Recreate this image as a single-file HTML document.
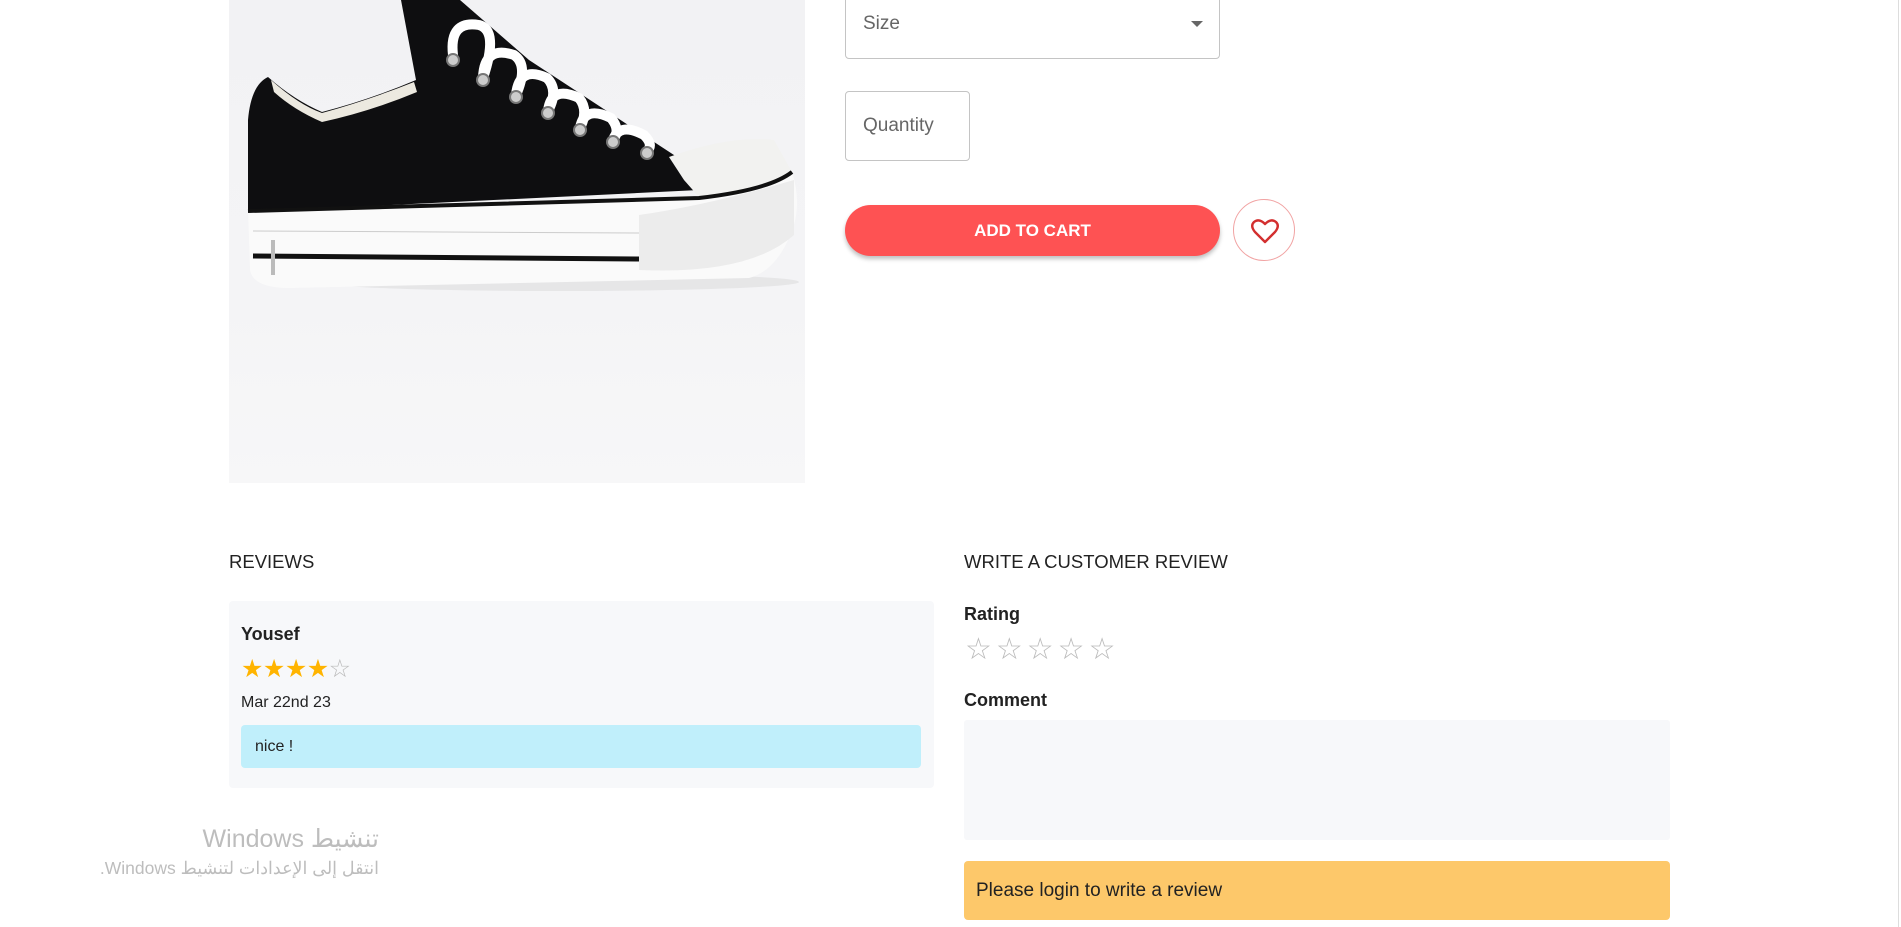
<!DOCTYPE html>
<html><head><meta charset="utf-8">
<style>
*{margin:0;padding:0;box-sizing:border-box}
body{width:1901px;height:927px;background:#fff;position:relative;overflow:hidden;font-family:"Liberation Sans",Arial,sans-serif;color:#222}
.abs{position:absolute}
.img{left:229px;top:0;width:576px;height:483px;background:linear-gradient(#f2f2f4,#f4f4f6 60%,#f7f7f8)}
.sel{left:845px;top:-20px;width:375px;height:79px;border:1px solid #c4c4c4;border-radius:4px}
.sel span{position:absolute;left:17px;top:32px;font-size:19px;color:#666}
.sel i{position:absolute;right:16px;top:40px;width:0;height:0;border-left:6px solid transparent;border-right:6px solid transparent;border-top:6px solid #666}
.qty{left:845px;top:91px;width:125px;height:70px;border:1px solid #c4c4c4;border-radius:4px}
.qty span{position:absolute;left:17px;top:23px;font-size:19px;color:#666}
.btn{left:845px;top:205px;width:375px;height:51px;background:#fe5253;border-radius:26px;box-shadow:0 3px 4px rgba(0,0,0,.25);color:#fff;font-weight:bold;font-size:17px;text-align:center;line-height:51px}
.heart{left:1233px;top:199px;width:62px;height:62px;border:1px solid #f1a3a3;border-radius:50%}
h3{position:absolute;font-weight:normal;font-size:19px;color:#222}
.card{left:229px;top:601px;width:705px;height:187px;background:#f7f8fa;border-radius:4px}
.lbl{position:absolute;font-size:18px;font-weight:bold;color:#222}
</style></head><body>
<div class="abs img">
<svg width="576" height="483" viewBox="0 0 576 483">
<ellipse cx="330" cy="282" rx="240" ry="9" fill="#dcdcde" opacity=".6"/>
<path d="M19,210 L19,120 Q22,85 39,77 Q65,100 93,112 Q140,100 187,80 L172,0 L231,0 L300,60 L448,157 L470,190 L19,212 Z" fill="#0e0e10"/>
<path d="M42,80 Q70,105 93,113 Q140,100 185,82 L188,92 Q140,112 93,122 Q65,110 45,92Z" fill="#ece9e0"/>
<path d="M440,157 Q500,135 545,140 L563,172 Q540,190 470,197 L455,180Z" fill="#f2f2f0"/>
<path d="M19,210 L470,197 Q540,190 563,172 Q572,200 565,225 Q550,270 520,278 L60,288 Q24,288 21,270Z" fill="#fafafa"/>
<path d="M19,211 L470,198 Q540,190 563,172" stroke="#111" stroke-width="4" fill="none"/>
<path d="M24,256 L410,259" stroke="#111" stroke-width="5" fill="none"/>
<path d="M24,231 L410,233" stroke="#ccc" stroke-width="1" fill="none"/>
<path d="M410,215 Q480,205 565,180 L565,235 Q520,275 410,270Z" fill="#ececec"/>
<path d="M44,240 L44,275" stroke="#bbb" stroke-width="4"/>
<g stroke="#fff" stroke-width="10" stroke-linecap="round" fill="none">
<path d="M224,55 Q220,20 250,25 Q270,30 254,78"/><path d="M254,78 Q255,45 285,55 Q300,65 287,95"/><path d="M287,95 Q290,65 318,78 Q330,90 319,111"/><path d="M319,111 Q322,85 350,98 Q360,110 351,128"/><path d="M351,128 Q355,105 382,118 Q392,130 384,140"/><path d="M384,140 Q390,122 415,135 Q425,145 418,151"/>
</g>
<g fill="#ccc" stroke="#777" stroke-width="2">
<circle cx="224" cy="60" r="6"/><circle cx="254" cy="80" r="6"/><circle cx="287" cy="97" r="6"/><circle cx="319" cy="113" r="6"/><circle cx="351" cy="130" r="6"/><circle cx="384" cy="142" r="6"/><circle cx="418" cy="153" r="6"/>
</g>
</svg>
</div>
<div class="abs sel"><span>Size</span><i></i></div>
<div class="abs qty"><span>Quantity</span></div>
<div class="abs btn">ADD TO CART</div>
<div class="abs heart"><svg width="62" height="62" viewBox="0 0 62 62"><path d="M31,42 L21,32 Q16,26 20,22 Q25,18 31,24 Q37,18 42,22 Q46,26 41,32 Z" fill="none" stroke="#d32f2f" stroke-width="2.4" stroke-linejoin="round"/></svg></div>

<h3 style="left:229px;top:551px;font-size:18.5px">REVIEWS</h3>
<h3 style="left:964px;top:551px;font-size:18.5px">WRITE A CUSTOMER REVIEW</h3>
<div class="abs card"></div>
<div class="lbl" style="left:241px;top:624px">Yousef</div>
<div class="abs" style="left:241px;top:654px;font-size:25px;color:#ffb400;letter-spacing:-0.5px">★★★★<span style="color:#bbb">☆</span></div>
<div class="abs" style="left:241px;top:694px;font-size:16px;color:#222">Mar 22nd 23</div>
<div class="abs" style="left:241px;top:725px;width:680px;height:43px;background:#c0effb;border-radius:4px;font-size:16px;line-height:43px;padding-left:14px">nice !</div>

<div class="lbl" style="left:964px;top:604px">Rating</div>
<div class="abs" style="left:965px;top:632px;font-size:30px;color:#bbb;letter-spacing:4px">☆☆☆☆☆</div>
<div class="lbl" style="left:964px;top:690px">Comment</div>
<div class="abs" style="left:964px;top:720px;width:706px;height:120px;background:#f7f8fa;border-radius:3px"></div>
<div class="abs" style="left:964px;top:861px;width:706px;height:59px;background:#fdc86a;border-radius:4px;font-size:19px;line-height:59px;padding-left:12px;color:#222">Please login to write a review</div>

<div class="abs" style="right:1522px;top:824px;font-size:25px;color:#bdbdbd;direction:rtl;white-space:nowrap">تنشيط Windows</div>
<div class="abs" style="right:1522px;top:858px;font-size:17.5px;color:#bdbdbd;direction:rtl;white-space:nowrap">انتقل إلى الإعدادات لتنشيط Windows.</div>
<div class="abs" style="left:1898px;top:0;width:1px;height:927px;background:#ddd"></div>
</body></html>
